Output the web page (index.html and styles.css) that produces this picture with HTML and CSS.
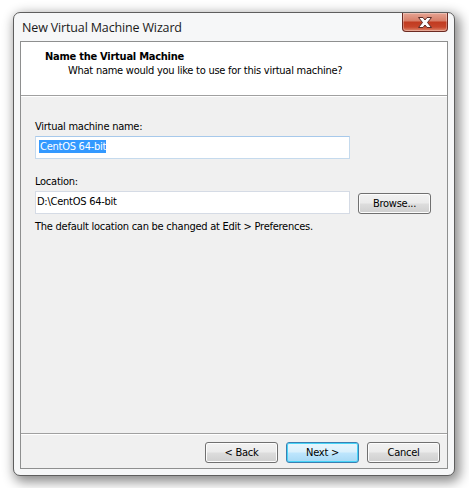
FILE: index.html
```html
<!DOCTYPE html>
<html>
<head>
<meta charset="utf-8">
<link rel="stylesheet" href="styles.css">
</head>
<body>
<div class="window">
  <div class="titlebar">
    <span class="title">New Virtual Machine Wizard</span>
    <div class="close">
      <svg width="18" height="13" viewBox="0 0 18 13">
        <path d="M2.5 1.5 H7 L9 4 L11 1.5 H15.5 L11.5 6.5 L15.5 11.5 H11 L9 9 L7 11.5 H2.5 L6.5 6.5 Z" fill="#fdfdfd" stroke="#5b2b26" stroke-width="1" stroke-linejoin="round"/>
      </svg>
    </div>
  </div>
  <div class="client">
    <div class="header">
      <div class="h-title">Name the Virtual Machine</div>
      <div class="h-sub">What name would you like to use for this virtual machine?</div>
    </div>
    <div class="body">
      <label class="lbl">Virtual machine name:</label>
      <div class="input focus"><span class="sel">CentOS 64-bit</span></div>
      <label class="lbl lbl2">Location:</label>
      <div class="row">
        <div class="input">D:\CentOS 64-bit</div>
        <button class="btn browse">Browse...</button>
      </div>
      <div class="note">The default location can be changed at Edit &gt; Preferences.</div>
    </div>
    <div class="footer">
      <button class="btn">&lt; Back</button>
      <button class="btn default">Next &gt;</button>
      <button class="btn">Cancel</button>
    </div>
  </div>
</div>
</body>
</html>
```
FILE: styles.css
```css
html, body {
  margin: 0;
  padding: 0;
  background: #ffffff;
}
body {
  width: 469px;
  height: 488px;
  overflow: hidden;
  font-family: "DejaVu Sans Condensed", "DejaVu Sans", sans-serif;
  font-size: 11px;
  letter-spacing: -0.25px;
  color: #000;
}
.window {
  margin: 12px 0 0 13px;
  width: 442px;
  height: 464px;
  box-sizing: border-box;
  border: 1px solid #5e5e5e;
  border-radius: 7px;
  background: #f6f7f8;
  box-shadow: 3px 4px 12px 2px rgba(0,0,0,0.45);
  display: flex;
  flex-direction: column;
  padding: 0 6px 6px 6px;
}
.titlebar {
  height: 28px;
  display: flex;
  align-items: flex-start;
  justify-content: space-between;
}
.title {
  font-family: "Open Sans", sans-serif;
  font-size: 12.5px;
  letter-spacing: -0.15px;
  color: #1a1a1a;
  margin: 6px 0 0 2px;
}
.close {
  width: 46px;
  height: 19px;
  margin-top: 0;
  box-sizing: border-box;
  border: 1px solid #6b2a22;
  border-top: none;
  border-radius: 0 0 4px 4px;
  background: linear-gradient(#e6a493 0%, #d8806a 42%, #c13b20 52%, #c7462b 78%, #e08b70 100%);
  display: flex;
  align-items: center;
  justify-content: center;
  box-shadow: inset 0 0 0 1px rgba(255,255,255,0.3);
}
.client {
  flex: 1;
  border: 1px solid #8e8f8f;
  background: #f0f0f0;
  display: flex;
  flex-direction: column;
}
.header {
  height: 53px;
  background: #ffffff;
  border-bottom: 1px solid #a0a0a0;
  box-shadow: 0 1px 0 #ffffff;
}
.h-title {
  font-weight: bold;
  margin: 8px 0 0 24px;
  line-height: 13px;
}
.h-sub {
  margin: 1px 0 0 47px;
  line-height: 13px;
}
.body {
  flex: 1;
  padding: 24px 0 0 14px;
  display: flex;
  flex-direction: column;
  align-items: flex-start;
}
.lbl {
  line-height: 13px;
  height: 13px;
}
.lbl2 {
  margin-top: 16px;
}
.input {
  width: 315px;
  height: 23px;
  box-sizing: border-box;
  border: 1px solid #d5dbe5;
  background: #fff;
  margin-top: 3px;
  padding: 3px 0 0 1px;
  line-height: 13px;
}
.input.focus {
  border-color: #c5daed;
  border-top-color: #a7c9eb;
}
.sel {
  background: #3399ff;
  color: #fff;
  margin-left: 2px;
  padding-left: 1px;
}
.row {
  display: flex;
  align-items: flex-start;
}
.btn {
  font-family: inherit;
  font-size: 11px;
  letter-spacing: inherit;
  color: #000;
  width: 73px;
  height: 21px;
  box-sizing: border-box;
  border: 1px solid #707070;
  border-radius: 3px;
  background: linear-gradient(#f2f2f2 0%, #ebebeb 48%, #dddddd 52%, #cfcfcf 100%);
  box-shadow: inset 0 0 0 1px #fcfcfc;
  padding: 0;
  line-height: 17px;
}
.browse {
  margin: 5px 0 0 8px;
}
.note {
  margin-top: 6px;
  line-height: 13px;
}
.footer {
  height: 35px;
  box-sizing: border-box;
  border-top: 1px solid #a0a0a0;
  box-shadow: inset 0 1px 0 #ffffff;
  display: flex;
  justify-content: flex-end;
  align-items: flex-start;
  gap: 8px;
  padding: 8px 7px 0 0;
}
.btn.default {
  border-color: #3c7fb1;
  background: linear-gradient(#eaf6fd 0%, #d9f0fc 48%, #bee6fd 52%, #a7d9f5 100%);
  box-shadow: inset 0 0 0 1px #48d4f7;
}
```
